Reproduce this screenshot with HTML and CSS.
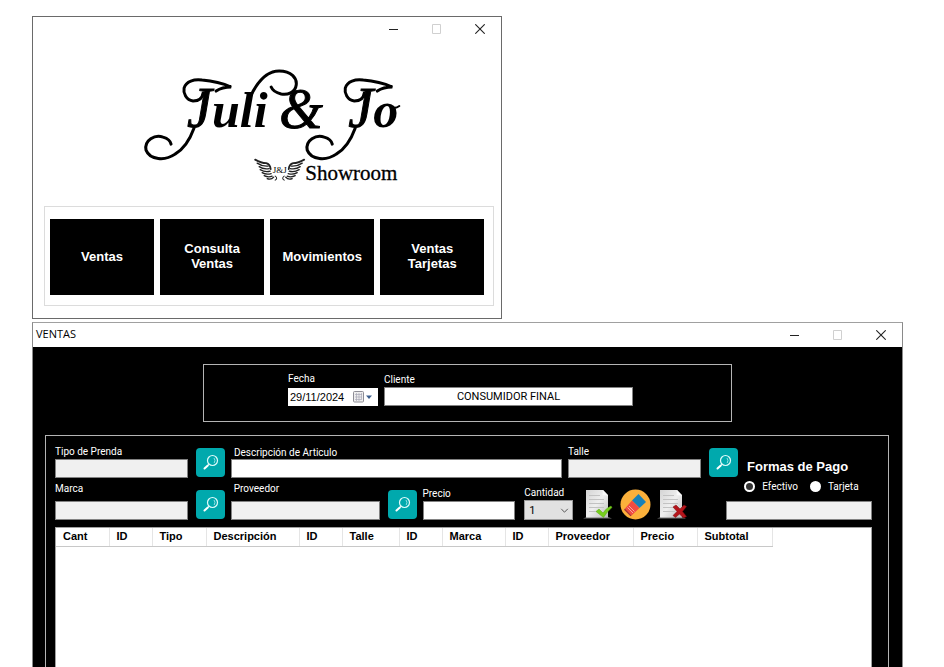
FILE: index.html
```html
<!DOCTYPE html>
<html lang="es">
<head>
<meta charset="utf-8">
<title>Juli &amp; Jo Showroom</title>
<link rel="stylesheet" href="styles.css">
</head>
<body>
<svg class="defs" aria-hidden="true">
  <defs>
    <symbol id="search" viewBox="0 0 29 29">
      <circle cx="16.500" cy="12.500" r="5" fill="none" stroke="#dffafa" stroke-width="1.200"/>
      <path d="M18 10q1.800 2.300.2 5" fill="none" stroke="#b5eeee" stroke-width=".8"/>
      <path d="M13 16.200l-1.400 1.300" stroke="#dffafa" stroke-width="1"/>
      <path d="M11.800 17.500l-3.300 3" stroke="#fff" stroke-width="2" stroke-linecap="round"/>
    </symbol>
    <symbol id="min" viewBox="0 0 10 10"><path d="M0 5.500h9" stroke="#222"/></symbol>
    <symbol id="max" viewBox="0 0 10 10"><path d="M.5.500h8v9h-8z" fill="none" stroke="#d0d0d0"/></symbol>
    <symbol id="close" viewBox="0 0 10 10"><path d="M.3.300l9.400 9.400M9.700.300L.3 9.700" stroke="#222" stroke-width="1.100"/></symbol>
    <linearGradient id="paper" x1="0" y1="0" x2="1" y2="1"><stop offset="0" stop-color="#d4d4d4"/><stop offset=".5" stop-color="#efefef"/><stop offset="1" stop-color="#bdbdbd"/></linearGradient>
    <g id="sheet">
      <path d="M0 29.500l4-1.500h21l4 1.500z" fill="#777"/>
      <path d="M3 1h17l5 5v22.500H3z" fill="url(#paper)"/>
      <path d="M20 1l5 5.500-5.500-.5z" fill="#fafafa"/>
      <path d="M6 6.500h11M6 10.500h15M6 14.500h15M6 18.500h15M6 22.500h12" stroke="#c2c2c2"/>
    </g>
    <g id="swash">
      <path d="M73 38Q72 46 63 46C56 45 53 38 54 33C56 26 64 24 72 25C84 26 92 28 101 32Q92 32 86 36" stroke-width="3"/>
      <path d="M64 73C60 84 54 94 45 99C35 106 20 105 16 95C14 85 25 79 33 82Q40 84 41 89" stroke-width="3"/>
    </g>
    <g id="wing" fill="none" stroke="#222" stroke-linecap="round">
      <path d="M125 104.500Q131 108 136 108Q140 109 140.500 114" stroke-width="1.800"/>
      <path d="M127 108Q132 111.500 138 111M129 111.500Q133 114.500 139 113.500M130 114.500Q135 117.500 140 116M132 117.500Q136 120 141 118.500M134 120.500Q138 122.500 142 121M137 123.500Q141 125 143.500 122" stroke-width="1.300"/>
      <path d="M145 121Q148 123 145 125" stroke-width="1"/>
    </g>
  </defs>
</svg>

<section class="window launcher">
  <header class="titlebar">
    <h1></h1>
    <div class="controls">
      <button aria-label="Minimizar"><svg><use href="#min"/></svg></button>
      <button aria-label="Maximizar" disabled><svg><use href="#max"/></svg></button>
      <button aria-label="Cerrar"><svg><use href="#close"/></svg></button>
    </div>
  </header>
  <svg class="logo" viewBox="0 0 290 140">
    <g class="script">
      <text x="57" y="72"><tspan class="cap">J</tspan>uli</text>
      <text class="amp" x="149" y="73">&amp;</text>
      <text x="218" y="72"><tspan class="cap">J</tspan>o</text>
    </g>
    <g fill="none" stroke="#000" stroke-linecap="round">
      <use href="#swash"/>
      <use href="#swash" x="161"/>
      <path d="M120 42C127 27 136 16 149 16C161 16 167 23 166 30C165 38 157 40 151 39Q143 37 141 32" stroke-width="3"/>
      <path d="M261 52q4 2 8-1" stroke-width="2"/>
    </g>
    <use href="#wing"/>
    <use href="#wing" transform="translate(299 0) scale(-1 1)"/>
    <text class="initials" x="149.500" y="118" text-anchor="middle">J&amp;J</text>
    <text class="showroom" x="175" y="125">Showroom</text>
  </svg>
  <nav class="menu">
    <button>Ventas</button>
    <button>Consulta<br>Ventas</button>
    <button>Movimientos</button>
    <button>Ventas<br>Tarjetas</button>
  </nav>
</section>

<section class="window sales">
  <header class="titlebar">
    <h1>VENTAS</h1>
    <div class="controls">
      <button aria-label="Minimizar"><svg><use href="#min"/></svg></button>
      <button aria-label="Maximizar" disabled><svg><use href="#max"/></svg></button>
      <button aria-label="Cerrar"><svg><use href="#close"/></svg></button>
    </div>
  </header>
  <main class="work">
    <div class="customer">
      <div class="field date">
        <label for="fecha">Fecha</label>
        <div class="datebox">
          <input id="fecha" value="29/11/2024">
          <button aria-label="Abrir calendario"><svg viewBox="0 0 20 12"><rect x=".5" y=".5" width="10" height="10.500" rx="1" fill="#eee" stroke="#8d8d95"/><path d="M2 3.500h7M2 6h7M2 8.500h7M3.500 2v8M6 2v8M8.500 2v6" stroke="#a9a9b8" stroke-width=".7"/><path d="M13 4.500h6l-3 3.500z" fill="#3b5d8c"/></svg></button>
        </div>
      </div>
      <div class="field client">
        <label for="cliente">Cliente</label>
        <input id="cliente" value="CONSUMIDOR FINAL">
      </div>
    </div>

    <div class="panel">
      <div class="row first">
        <div class="field short"><label for="tipo">Tipo de Prenda</label><input id="tipo" readonly></div>
        <button class="find" aria-label="Buscar tipo"><svg><use href="#search"/></svg></button>
        <div class="field long tight inset"><label for="desc">Descripción de Articulo</label><input id="desc"></div>
        <div class="field short"><label for="talle">Talle</label><input id="talle" readonly></div>
        <button class="find" aria-label="Buscar talle"><svg><use href="#search"/></svg></button>
        <h2>Formas de Pago</h2>
      </div>
      <div class="row second">
        <div class="field short"><label for="marca">Marca</label><input id="marca" readonly></div>
        <button class="find" aria-label="Buscar marca"><svg><use href="#search"/></svg></button>
        <div class="field supplier inset"><label for="prov">Proveedor</label><input id="prov" readonly></div>
        <button class="find" aria-label="Buscar proveedor"><svg><use href="#search"/></svg></button>
        <div class="field price tight"><label for="precio">Precio</label><input id="precio"></div>
        <div class="field amount tight">
          <label for="cant">Cantidad</label>
          <div class="selectbox">
            <select id="cant"><option>1</option><option>2</option><option>3</option></select>
            <svg viewBox="0 0 10 6"><path d="M1 1l4 4 4-4" fill="none" stroke="#555" stroke-width="1.200"/></svg>
          </div>
        </div>
        <div class="actions">
          <button aria-label="Agregar"><svg viewBox="0 0 31 31"><use href="#sheet"/><path d="M13 22.500l3-2.500 4 4q3-5 8-7l1 1.500q-5 4-8.500 10z" fill="#76cf1d" stroke="#58a812" stroke-width=".5"/></svg></button>
          <button aria-label="Limpiar"><svg viewBox="0 0 31 31"><circle cx="15.500" cy="15.500" r="15" fill="#fbb03b"/><path d="M18.500 5l7.500 8-6.500 6-7.500-7.500z" fill="#1781b8"/><path d="M12 11.500l7.500 7.500-8 7.500-6.500-7z" fill="#ef4b43"/><path d="M5 19.500l6.500 7-1 .8-6.500-6.500z" fill="#a32d37"/><path d="M7.500 18.500l5.500 5.500M9 17l5.500 5.500" stroke="#fff" stroke-width=".5"/></svg></button>
          <button aria-label="Eliminar"><svg viewBox="0 0 31 31"><use href="#sheet"/><path d="M16 18l3-2 4 4 4-4 2.500 1.500-4 5 4 5-3 1.500-4-4-4 3.500-2.500-2 4-4z" fill="#b5151b" stroke="#790b10" stroke-width=".5"/></svg></button>
        </div>
        <div class="payment">
          <div class="radios">
            <label><input type="radio" name="pago" checked>Efectivo</label>
            <label><input type="radio" name="pago">Tarjeta</label>
          </div>
          <input aria-label="Detalle de pago" readonly>
        </div>
      </div>
      <div class="items">
        <table>
          <colgroup><col class="c53"><col class="c43"><col class="c54"><col class="c93"><col class="c43"><col class="c57"><col class="c43"><col class="c63"><col class="c43"><col class="c85"><col class="c64"><col class="c75"></colgroup>
          <thead><tr><th>Cant</th><th>ID</th><th>Tipo</th><th>Descripción</th><th>ID</th><th>Talle</th><th>ID</th><th>Marca</th><th>ID</th><th>Proveedor</th><th>Precio</th><th>Subtotal</th></tr></thead>
        </table>
      </div>
    </div>
  </main>
</section>
</body>
</html>
```
FILE: styles.css
```css
* { box-sizing: border-box; }

body {
  margin: 0;
  min-height: 100vh;
  padding: 16px 41px 0 32px;
  display: flex;
  flex-direction: column;
  gap: 3px;
  background: #fff;
  font-family: Roboto, "Liberation Sans", sans-serif;
  font-size: 11px;
  color: #000;
}

.defs { position: absolute; width: 0; height: 0; }
button { padding: 0; border: 0; background: none; font: inherit; }
svg { display: block; }
h1, h2 { margin: 0; }

.window { border: 1px solid #6a6a6a; background: #fff; }
.launcher { width: 54%; padding-bottom: 12px; }
.sales {
  flex: 1;
  display: flex;
  flex-direction: column;
  border-color: #a0a0a0 #8a8a8a;
  border-bottom: 0;
}

.titlebar {
  display: flex;
  justify-content: space-between;
  align-items: center;
  height: 24px;
  padding: 0 16px 0 3px;
}
.titlebar h1 { font: 11px/20px "Open Sans", "Noto Sans", sans-serif; padding-bottom: 3px; }
.controls { display: flex; gap: 33px; }
.controls svg { width: 10px; height: 10px; }

.logo { width: 62%; margin: 14px 0 11px 97px; overflow: visible; }
.script { font: italic bold 50px "Liberation Serif", serif; }
.cap { font-size: 56px; font-weight: normal; stroke: #000; stroke-width: 1; }
.amp { font-size: 56px; font-weight: normal; stroke: #000; stroke-width: 1; }
.initials { font: 9px "Liberation Serif", serif; }
.showroom { font: 21px "Liberation Serif", serif; stroke: #000; stroke-width: 0.3; }

.menu {
  display: grid;
  grid-template-columns: repeat(4, 1fr);
  gap: 6px;
  margin: 0 7px 0 11px;
  padding: 12px 9px 10px 5px;
  border: 1px solid #dcdcdc;
}
.menu button {
  height: 76px;
  padding-bottom: 2px;
  background: #000;
  color: #fff;
  font: bold 13px/15px "Liberation Sans", sans-serif;
}

.work {
  flex: 1;
  display: flex;
  flex-direction: column;
  padding: 17px 13px 0 12px;
  background: #000;
  color: #fff;
}
.customer {
  display: flex;
  gap: 6px;
  align-items: flex-end;
  margin: 0 157px 13px 158px;
  padding: 7px 98px 15px 84px;
  border: 1px solid #b4b4b4;
}
.panel {
  flex: 1;
  display: flex;
  flex-direction: column;
  padding: 7px 16px 0 9px;
  border: 1px solid #b4b4b4;
  border-bottom: 0;
}

.field { display: flex; flex-direction: column; gap: 1px; min-width: 0; }
.field label { font-size: 10px; line-height: 13px; white-space: nowrap; }
.tight { gap: 0; }
.inset label { padding-left: 3px; }
.second .field { gap: 6px; }
.second .tight { gap: 1px; }
input:not([type="radio"]) {
  width: 100%;
  min-width: 0;
  height: 19px;
  padding: 0 2px;
  border: 1px solid #828282;
  background: #fff;
  font: inherit;
  color: #000;
}
input:read-only:not([type="radio"]) { background: #f0f0f0; }

.date { flex: 90 1 0; }
.customer .date { gap: 3px; }
.client { flex: 249 1 0; }
.customer .client input { text-align: center; }
.datebox {
  display: flex;
  align-items: center;
  padding-right: 5px;
  background: #fff;
}
.datebox input:not([type="radio"]) {
  flex: 1;
  height: 18px;
  border: 0;
  font-family: "Liberation Sans", sans-serif;
}
.datebox svg { width: 20px; height: 12px; }

.row { display: flex; align-items: flex-end; }
.first { height: 35px; }
.second { height: 42px; margin-bottom: 7px; }
.short { flex: 133 1 0; }
.long { flex: 331 1 0; margin-right: 6px; }
.supplier { flex: 149 1 0; }
.price { flex: 93 1 0; margin-right: 9px; }
.amount { flex: 49 1 0; }
.find {
  flex: none;
  width: 29px;
  height: 29px;
  margin: 0 6px 1px 8px;
  border-radius: 4px;
  background: #00a9ad;
}
.find svg { width: 29px; height: 29px; }
.row h2 {
  flex: 125 1 0;
  padding-left: 3px;
  white-space: nowrap;
  font: bold 13px/15px "Liberation Sans", sans-serif;
  margin-bottom: 4px;
}

.selectbox { position: relative; }
.selectbox select {
  appearance: none;
  display: block;
  width: 100%;
  height: 20px;
  padding: 0 4px;
  border: 1px solid #9a9a9a;
  border-radius: 0;
  background: #e1e1e1;
  font: inherit;
  color: #000;
}
.selectbox svg { position: absolute; right: 4px; top: 8px; width: 9px; height: 5px; pointer-events: none; }

.actions { display: flex; gap: 6px; margin: 0 38px 0 10px; }
.actions svg { width: 31px; height: 31px; }

.payment { flex: 146 1 0; }
.radios { display: flex; gap: 12px; margin: 0 0 8px 18px; }
.radios label { display: flex; align-items: center; gap: 7px; font-size: 10px; line-height: 13px; }
.radios input {
  appearance: none;
  width: 11px;
  height: 11px;
  margin: 0;
  border-radius: 50%;
  background: #fff;
}
.radios input:checked { border: 2px solid #fff; background: #333; }

.items {
  flex: 1;
  border: 1px solid #a0a0a0;
  border-bottom: 0;
  background: #fff;
  color: #000;
}
table { table-layout: fixed; width: 715px; max-width: 100%; border-collapse: collapse; }
th {
  height: 18px;
  padding: 0 0 0 7px;
  border-right: 1px solid #e5e5e5;
  border-bottom: 1px solid #c8c8c8;
  text-align: left;
  font: bold 11px/17px "Liberation Sans", sans-serif;
}
.c43 { width: 43px; }
.c53 { width: 53px; }
.c54 { width: 54px; }
.c57 { width: 57px; }
.c63 { width: 63px; }
.c64 { width: 64px; }
.c75 { width: 75px; }
.c85 { width: 85px; }
.c93 { width: 93px; }
```
